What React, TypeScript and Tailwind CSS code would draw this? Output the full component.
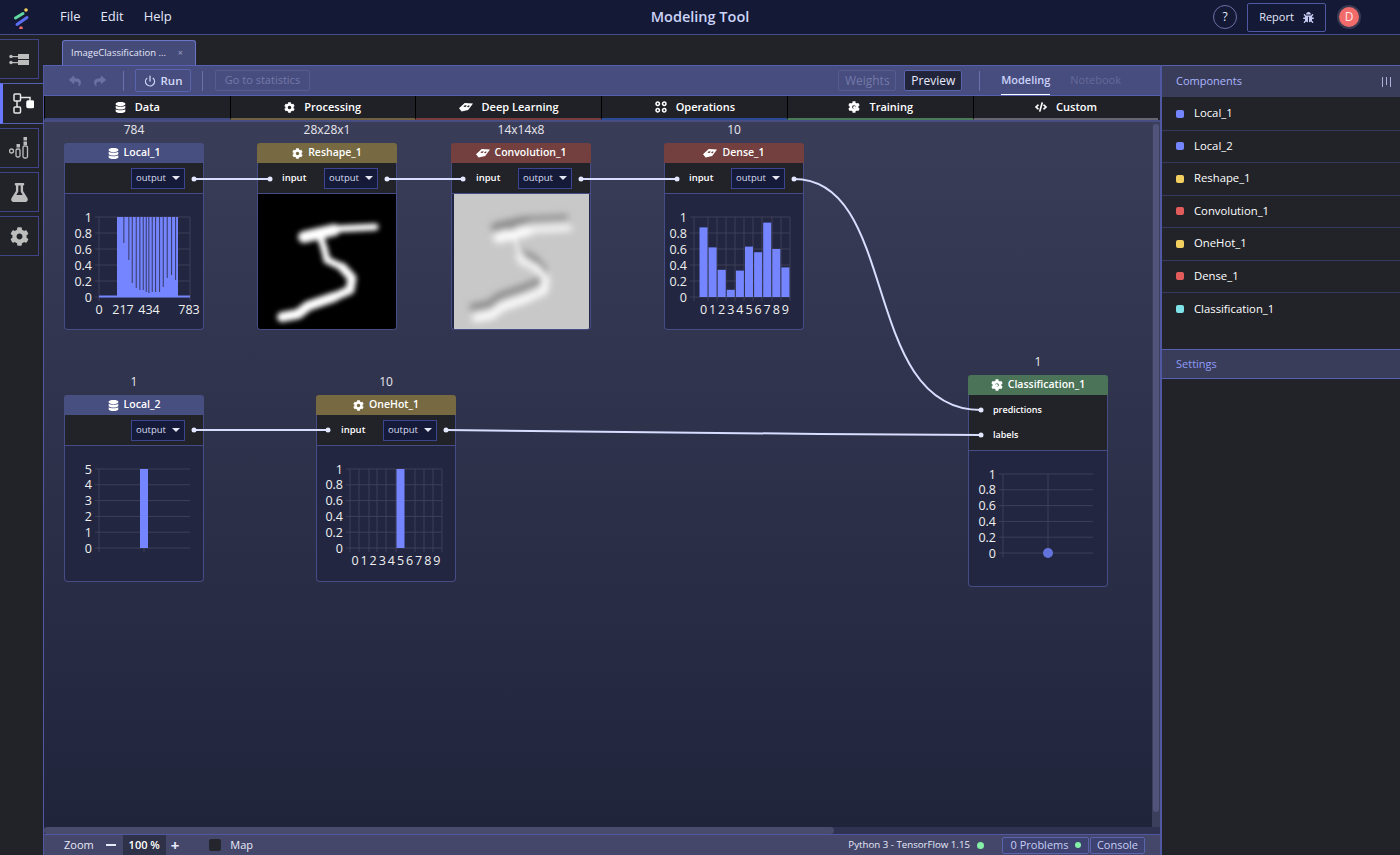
import React from "react";
import { FaBug, FaCode, FaCog, FaDatabase, FaFlask, FaReply, FaShare } from "react-icons/fa";
import { Power } from "lucide-react";

// canvas origin on the page, node and edge coordinates below are page pixels
const OX = 44;
const OY = 122;

const Brain = ({ className = "" }: { className?: string }) => (
  <svg viewBox="0 0 16 11" className={className} fill="currentColor">
    <path d="M0 7L6.500 1 16 1.500 10.500 9 3 10.500zM6.500 3.500L5 5.200l2.500.3 1.500-1.700zM10.500 3.800L9 5.500l2 .2 1.400-1.700z" fillRule="evenodd" />
  </svg>
);

const Ops = ({ className = "" }: { className?: string }) => (
  <svg viewBox="0 0 14 14" className={className} fill="none" stroke="currentColor" strokeWidth="1.800">
    <circle cx="3.200" cy="3.200" r="2" />
    <circle cx="10.800" cy="3.200" r="2" />
    <circle cx="3.200" cy="10.800" r="2" />
    <circle cx="10.800" cy="10.800" r="2" />
  </svg>
);

const TrainGear = ({ className = "" }: { className?: string }) => (
  <span className={`relative inline-flex items-center justify-center ${className}`}>
    <FaCog className="h-full w-full" />
    <span className="absolute h-[3px] w-[3px] rounded-full bg-white" />
  </span>
);

function Chart({
  yLabels,
  xLabels,
  x0,
  x1,
  top,
  bottom,
  vLines,
  children,
}: {
  yLabels: string[];
  xLabels: { t: string; x: number }[];
  x0: number;
  x1: number;
  top: number;
  bottom: number;
  vLines: number[];
  children?: React.ReactNode;
}) {
  const step = (bottom - top) / (yLabels.length - 1);
  return (
    <svg width="138" height="135" viewBox="0 0 138 135" className="block">
      {yLabels.map((l, i) => {
        const y = top + i * step;
        return (
          <g key={l}>
            <line x1={x0 - 4} x2={x1} y1={y} y2={y} stroke="#3f3f58" strokeWidth="1" />
            <text x={x0 - 7} y={y + 4.500} textAnchor="end" fontSize="12.500" fill="#f0f0f0">
              {l}
            </text>
          </g>
        );
      })}
      {vLines.map((x) => (
        <line key={x} x1={x} x2={x} y1={top} y2={bottom + 4} stroke="#3f3f58" strokeWidth="1" />
      ))}
      {children}
      {xLabels.map((l) => (
        <text key={l.t} x={l.x} y={bottom + 17} textAnchor="middle" fontSize="12.500" fill="#f0f0f0">
          {l.t}
        </text>
      ))}
    </svg>
  );
}

const Y_01 = ["1", "0.8", "0.6", "0.4", "0.2", "0"];
const digits = "0123456789".split("");

// dark notches cut into the flattened image chart: x, and how far down they reach
const notches = [
  [58.300, 49], [63.300, 66], [66.700, 89], [70.700, 94], [74.300, 96], [77.700, 96], [80.700, 98], [83.300, 99],
  [86.700, 98], [90, 98], [94, 98], [97.700, 93], [101.700, 84], [106, 81], [110, 86],
];

const Local1Chart = () => (
  <Chart
    yLabels={Y_01}
    xLabels={[
      { t: "0", x: 34 },
      { t: "217", x: 58 },
      { t: "434", x: 84 },
      { t: "783", x: 124 },
    ]}
    x0={34}
    x1={125}
    top={23}
    bottom={103}
    vLines={[34, 125]}
  >
    <rect x="34" y="101.500" width="91" height="2" fill="#7485ff" />
    <rect x="52" y="23" width="61" height="80" fill="#7485ff" />
    {notches.map(([x, d]) => (
      <rect key={x} x={x} y="23" width="1.100" height={d - 23} fill="#3b3f70" />
    ))}
  </Chart>
);

const denseVals = [0.87, 0.62, 0.34, 0.09, 0.33, 0.63, 0.56, 0.93, 0.6, 0.37];

const DenseChart = () => (
  <Chart
    yLabels={Y_01}
    xLabels={digits.map((t, i) => ({ t, x: 38.500 + i * 9.100 }))}
    x0={29}
    x1={125}
    top={23}
    bottom={103}
    vLines={[29, 43, 52, 61, 70, 79, 88, 97, 107, 116, 125]}
  >
    {denseVals.map((v, i) => (
      <rect key={i} x={34.500 + i * 9.100} y={103 - v * 80} width="8" height={v * 80} fill="#7485ff" />
    ))}
  </Chart>
);

const Local2Chart = () => (
  <Chart yLabels={["5", "4", "3", "2", "1", "0"]} xLabels={[]} x0={34} x1={125} top={23} bottom={102} vLines={[34, 79]}>
    <rect x="75" y="23" width="8" height="79" fill="#7485ff" />
  </Chart>
);

const OneHotChart = () => (
  <Chart
    yLabels={Y_01}
    xLabels={digits.map((t, i) => ({ t, x: 38 + i * 9.100 }))}
    x0={33}
    x1={125}
    top={23}
    bottom={102}
    vLines={[33, 42, 52, 60, 69, 79, 98, 107, 116, 125]}
  >
    <rect x="79.500" y="23" width="8" height="79" fill="#7485ff" />
  </Chart>
);

const ClassChart = () => (
  <Chart yLabels={Y_01} xLabels={[]} x0={34} x1={124} top={23} bottom={102} vLines={[34, 79]}>
    <circle cx="79" cy="102" r="5" fill="#6373dc" />
  </Chart>
);

// the handwritten 5, stroke by stroke so the widths can differ
const FIVE_STROKES: [string, number][] = [
  ["M117 33 L76 35", 7],
  ["M76 36 L46 43", 12],
  ["M62 42 L66 54 L69 66", 7],
  ["M69 66 L84 73", 7],
  ["M84 73 L94 84 L92 96 L76 103", 9],
  ["M76 103 L50 112 L40 120 L24 123", 10],
];

const DigitStrokes = ({ color, scale = 1 }: { color: string; scale?: number }) => (
  <>
    {FIVE_STROKES.map(([d, w]) => (
      <path key={d} d={d} fill="none" stroke={color} strokeWidth={w * scale} strokeLinejoin="round" strokeLinecap="round" />
    ))}
  </>
);

const DigitImage = () => (
  <svg width="138" height="135" viewBox="0 0 138 135" className="block bg-black">
    <defs>
      <filter id="blur5" x="-20%" y="-20%" width="140%" height="140%">
        <feGaussianBlur stdDeviation="2.800" />
      </filter>
    </defs>
    <g filter="url(#blur5)">
      <DigitStrokes color="#ffffff" />
    </g>
  </svg>
);

const EmbossImage = () => (
  <svg width="135" height="135" viewBox="0 0 135 135" className="block bg-[#c8c8c8]">
    <defs>
      <filter id="blur6" x="-20%" y="-20%" width="140%" height="140%">
        <feGaussianBlur stdDeviation="3.500" />
      </filter>
    </defs>
    <g transform="translate(-5 -10)" filter="url(#blur6)">
      <DigitStrokes color="#8a8a8a" scale={0.7} />
    </g>
    <g transform="translate(-2 1)" filter="url(#blur6)">
      <DigitStrokes color="#ffffff" scale={0.8} />
    </g>
  </svg>
);

const Select = () => (
  <div className="flex h-[21px] w-[54px] items-center justify-between border border-[#3c4690] bg-[#141a38] pl-1 pr-[4px] text-[9.500px] text-[#d8dcf0]">
    output
    <span className="h-0 w-0 border-x-[4px] border-t-[4px] border-x-transparent border-t-[#e6e8f4]" />
  </div>
);

const HEAD = {
  data: "bg-[#474e80]",
  proc: "bg-[#776a42]",
  deep: "bg-[#733f3f]",
  train: "bg-[#4a7358]",
};

function Node({
  x,
  y,
  w = 140,
  size,
  name,
  head,
  icon,
  input = true,
  children,
}: {
  x: number;
  y: number;
  w?: number;
  size: string;
  name: string;
  head: string;
  icon: React.ReactNode;
  input?: boolean;
  children: React.ReactNode;
}) {
  return (
    <div className="absolute" style={{ left: x - OX, top: y - OY, width: w }}>
      <div className="absolute -top-[20px] left-0 right-0 text-center text-[12px] leading-[14px] text-[#e8e8ee]">{size}</div>
      <div className={`flex h-[20px] items-center justify-center gap-[5px] rounded-t-[3px] text-[10.500px] font-semibold text-white ${head}`}>
        {icon}
        {name}
      </div>
      <div className="overflow-hidden rounded-b-[4px] border-x border-b border-[#454c86] bg-[#222640]">
        <div className={`flex h-[31px] items-center border-b border-[#454c86] bg-[#222329] pr-[18px] ${input ? "justify-between pl-6" : "justify-end"}`}>
          {input && <span className="text-[9.500px] font-semibold text-white">input</span>}
          <Select />
        </div>
        {children}
      </div>
    </div>
  );
}

const edges = [
  "M194 179 L270 179",
  "M387 179 L463 179",
  "M581 179 L677 179",
  "M794 179 C 900 179, 860 410, 981 410",
  "M194 430 L328 430",
  "M446 430 C 600 430, 800 435, 981 435",
];
const dots = [
  [194, 179], [270, 179], [387, 179], [463, 179], [581, 179], [677, 179], [794, 179],
  [194, 430], [328, 430], [446, 430], [981, 410], [981, 435],
];

const Canvas = () => (
  <div className="relative min-h-0 flex-1 overflow-hidden bg-gradient-to-b from-[#3a3d58] to-[#20243b]">
    <Node x={64} y={143} size="784" name="Local_1" head={HEAD.data} icon={<FaDatabase className="h-[11px] w-[11px]" />} input={false}>
      <Local1Chart />
    </Node>
    <Node x={257} y={143} size="28x28x1" name="Reshape_1" head={HEAD.proc} icon={<FaCog className="h-[11px] w-[11px]" />}>
      <DigitImage />
    </Node>
    <Node x={451} y={143} size="14x14x8" name="Convolution_1" head={HEAD.deep} icon={<Brain className="h-[10px] w-[14px]" />}>
      <div className="flex justify-center">
        <EmbossImage />
      </div>
    </Node>
    <Node x={664} y={143} size="10" name="Dense_1" head={HEAD.deep} icon={<Brain className="h-[10px] w-[14px]" />}>
      <DenseChart />
    </Node>
    <Node x={64} y={395} size="1" name="Local_2" head={HEAD.data} icon={<FaDatabase className="h-[11px] w-[11px]" />} input={false}>
      <Local2Chart />
    </Node>
    <Node x={316} y={395} size="10" name="OneHot_1" head={HEAD.proc} icon={<FaCog className="h-[11px] w-[11px]" />}>
      <OneHotChart />
    </Node>

    <div className="absolute" style={{ left: 968 - OX, top: 375 - OY, width: 140 }}>
      <div className="absolute -top-[20px] left-0 right-0 text-center text-[12px] leading-[14px] text-[#e8e8ee]">1</div>
      <div className={`flex h-[20px] items-center justify-center gap-[5px] rounded-t-[3px] text-[10.500px] font-semibold text-white ${HEAD.train}`}>
        <TrainGear className="h-[12px] w-[12px]" />
        Classification_1
      </div>
      <div className="overflow-hidden rounded-b-[4px] border-x border-b border-[#454c86] bg-[#222640]">
        <div className="flex h-[56px] flex-col justify-center gap-[11px] border-b border-[#454c86] bg-[#222329] pl-6 text-[9px] font-semibold leading-[14px] text-white">
          <span>predictions</span>
          <span>labels</span>
        </div>
        <ClassChart />
      </div>
    </div>

    {/* connections */}
    <svg className="pointer-events-none absolute left-0 top-0" width="1116" height="712" viewBox={`${OX} ${OY} 1116 712`} fill="none">
      {edges.map((d) => (
        <path key={d} d={d} stroke="#d8deff" strokeWidth="2" />
      ))}
      {dots.map(([cx, cy]) => (
        <circle key={`${cx}-${cy}`} cx={cx} cy={cy} r="2.500" fill="#e4e8ff" />
      ))}
    </svg>

    {/* scrollbars */}
    <div className="absolute bottom-0 right-0 top-0 w-[8px] bg-[#3c3f5c]">
      <div className="mx-auto mt-[2px] h-[688px] w-[6px] rounded-full bg-[#50547a]" />
    </div>
    <div className="absolute bottom-0 left-0 right-0 h-[7px] bg-[#2f3250]">
      <div className="h-[7px] w-[790px] rounded-full bg-[#484b6c]" />
    </div>
  </div>
);

const catTabs = [
  { label: "Data", icon: <FaDatabase className="h-[11px] w-[11px]" />, bar: "border-b-[#414a80]", w: "w-[186px]" },
  { label: "Processing", icon: <FaCog className="h-[11px] w-[11px]" />, bar: "border-b-[#6f6040]", w: "w-[185px]" },
  { label: "Deep Learning", icon: <Brain className="h-[10px] w-[14px]" />, bar: "border-b-[#7a3d3d]", w: "w-[187px]" },
  { label: "Operations", icon: <Ops className="h-[12px] w-[12px]" />, bar: "border-b-[#2b4c94]", w: "w-[186px]" },
  { label: "Training", icon: <TrainGear className="h-[12px] w-[12px]" />, bar: "border-b-[#4a7a58]", w: "w-[186px]" },
  { label: "Custom", icon: <FaCode className="h-[12px] w-[12px]" />, bar: "border-b-[#666670]", w: "w-[185px]" },
];

const components = [
  { name: "Local_1", dot: "bg-[#7485ff]" },
  { name: "Local_2", dot: "bg-[#7485ff]" },
  { name: "Reshape_1", dot: "bg-[#f2d060]" },
  { name: "Convolution_1", dot: "bg-[#e25c5c]" },
  { name: "OneHot_1", dot: "bg-[#f2d060]" },
  { name: "Dense_1", dot: "bg-[#e25c5c]" },
  { name: "Classification_1", dot: "bg-[#7fe3ea]" },
];

const NavBox = ({ active, children }: { active?: boolean; children: React.ReactNode }) =>
  active ? (
    <div className="relative z-10 flex h-[41px] w-[43px] items-center justify-center border-y border-[#5660b0] border-l-[3px] border-l-[#6a78ff] bg-[#222329] text-[#e8e8e8]">
      {children}
    </div>
  ) : (
    <div className="flex h-[40px] w-[39px] items-center justify-center border-y border-r border-[#3f4588] bg-[#222329] text-[#bdbdbd]">
      {children}
    </div>
  );

export default function App() {
  return (
    <div className="flex h-[855px] w-[1400px] flex-col overflow-hidden bg-[#222329] font-['Open_Sans',sans-serif] text-white">
      {/* top bar */}
      <header className="relative flex h-[35px] shrink-0 items-center border-b border-[#454c8c] bg-[#141a35]">
        <svg width="24" height="24" viewBox="0 0 24 24" className="ml-[11px]">
          <line x1="4.500" y1="13" x2="12" y2="8.500" stroke="#5fd9a0" strokeWidth="3" strokeLinecap="round" />
          <line x1="6" y1="19.500" x2="16" y2="12.500" stroke="#5c6ef0" strokeWidth="3" strokeLinecap="round" />
          <circle cx="15" cy="5" r="1.800" fill="#f2d060" />
          <circle cx="10" cy="23" r="1.800" fill="#ef6b6b" />
        </svg>
        <nav className="ml-[25px] flex gap-[20px] text-[13px] text-[#e4e7fa]">
          <span>File</span>
          <span>Edit</span>
          <span>Help</span>
        </nav>
        <div className="absolute left-0 right-0 text-center text-[14.500px] font-semibold text-[#ccd3f8]">Modeling Tool</div>
        <div className="ml-auto mr-[39px] flex items-center">
          <div className="flex h-[24px] w-[24px] items-center justify-center rounded-full border border-[#6a70a8] text-[12px] text-[#e4e7fa]">?</div>
          <div className="ml-[10px] flex h-[29px] w-[79px] items-center justify-center gap-[9px] rounded-[2px] border border-[#4f58a0] text-[11px] text-[#e4e7fa]">
            Report
            <FaBug className="h-[11px] w-[11px] text-[#c6ccf4]" />
          </div>
          <div className="ml-[11px] flex h-[24px] w-[24px] items-center justify-center rounded-full border-[2px] border-[#373a52] bg-[#f26b6b] text-[12px] text-[#fde6e6]">D</div>
        </div>
      </header>

      <div className="flex min-h-0 flex-1">
        {/* nav rail */}
        <aside className="flex w-[43px] shrink-0 flex-col gap-[4px] pt-[4px]">
          <NavBox>
            <svg width="20" height="11" viewBox="0 0 20 11" fill="currentColor">
              <rect x="9" y="0" width="11" height="5" />
              <rect x="9" y="6" width="11" height="5" />
              <rect x="2" y="2" width="8" height="1.200" />
              <rect x="2" y="8" width="8" height="1.200" />
              <circle cx="2" cy="2.500" r="1.700" />
              <circle cx="2" cy="8.500" r="1.700" />
            </svg>
          </NavBox>
          <NavBox active>
            <svg width="21" height="21" viewBox="0 0 21 21" fill="none" stroke="currentColor" strokeWidth="1.500">
              <rect x="1" y="1" width="6.500" height="7" rx="1" />
              <rect x="1" y="14" width="6.500" height="6" rx="1" />
              <rect x="14" y="8" width="6.500" height="6.500" rx="1" fill="#fff" stroke="#fff" />
              <path d="M4 8V14M7.500 4.500H17V8" />
            </svg>
          </NavBox>
          <NavBox>
            <svg width="20" height="24" viewBox="0 0 20 24" fill="none" stroke="currentColor" strokeWidth="1.300">
              <circle cx="2.500" cy="15" r="2" />
              <rect x="7" y="13" width="4" height="8" rx="1.500" />
              <rect x="7.500" y="8" width="3.500" height="3.500" fill="currentColor" stroke="none" />
              <rect x="14" y="10" width="4.500" height="12" rx="1.500" />
              <rect x="14.500" y="1" width="3.500" height="3.500" fill="currentColor" stroke="none" />
              <rect x="14.500" y="5.500" width="3.500" height="3.500" fill="currentColor" stroke="none" />
            </svg>
          </NavBox>
          <NavBox>
            <FaFlask className="h-[19px] w-[19px]" />
          </NavBox>
          <NavBox>
            <FaCog className="h-[19px] w-[19px]" />
          </NavBox>
        </aside>

        <div className="flex min-w-0 flex-1 flex-col">
          {/* file tabs */}
          <div className="flex h-[30px] shrink-0 items-end pl-[19px]">
            <div className="flex h-[25px] w-[134px] items-center justify-between rounded-t-[3px] border-x border-t border-[#6a74c8] bg-[#454b78] pl-2 pr-3 text-[9.500px] text-[#e4e7fa]">
              ImageClassification ...
              <span className="text-[9px] text-[#9a9fc4]">×</span>
            </div>
          </div>

          <div className="flex min-h-0 flex-1">
            {/* editor */}
            <main className="flex w-[1117px] shrink-0 flex-col border-l border-[#4f58a0]">
              <div className="flex h-[31px] shrink-0 items-center border-y border-[#5660b0] bg-[#474d7f] text-[12px]">
                <FaReply className="ml-[25px] h-[12px] w-[12px] text-[#6a70a0]" />
                <FaShare className="ml-[13px] h-[12px] w-[12px] text-[#6a70a0]" />
                <div className="ml-[17px] h-[20px] w-px bg-[#6a70a8]" />
                <div className="ml-[11px] flex h-[23px] w-[56px] items-center justify-center gap-[5px] rounded-[2px] border border-[#5a64ac] text-[11.500px] font-semibold text-[#d5daf8]">
                  <Power className="h-[12px] w-[12px]" strokeWidth={2.500} />
                  Run
                </div>
                <div className="ml-[11px] h-[20px] w-px bg-[#6a70a8]" />
                <div className="ml-[12px] flex h-[21px] w-[95px] items-center justify-center rounded-[2px] border border-[#565c90] text-[11px] text-[#7479a8]">Go to statistics</div>
                <div className="ml-auto flex h-[21px] w-[58px] items-center justify-center rounded-[2px] border border-[#565c90] text-[#7479a8]">Weights</div>
                <div className="ml-[8px] flex h-[21px] w-[58px] items-center justify-center rounded-[2px] border border-[#5a64ac] bg-[#22243a] text-[#e8eafa]">Preview</div>
                <div className="ml-[17px] h-[20px] w-px bg-[#6a70a8]" />
                <div className="relative ml-[21px] flex h-[29px] w-[49px] items-center justify-center text-[11px] font-semibold text-[#ccd3f8]">
                  Modeling
                  <span className="absolute bottom-0 left-0 right-0 h-px bg-white" />
                </div>
                <div className="ml-[20px] mr-[39px] text-[11px] text-[#656a98]">Notebook</div>
              </div>

              <div className="flex h-[26px] shrink-0 border-b-[2px] border-[#474d80] bg-[#202127] pr-[2px]">
                {catTabs.map((t) => (
                  <div key={t.label} className={`flex items-center justify-center gap-[9px] border-b-[2px] border-l border-l-black text-[11px] font-semibold text-white ${t.bar} ${t.w}`}>
                    {t.icon}
                    {t.label}
                  </div>
                ))}
              </div>

              <Canvas />

              <footer className="flex h-[21px] shrink-0 items-center border-t border-[#4f58a0] bg-[#44476a] text-[11px]">
                <span className="ml-[20px] text-[#e8eafa]">Zoom</span>
                <span className="ml-[12px] h-[2px] w-[10px] bg-[#e8eafa]" />
                <span className="ml-[7px] flex h-full w-[43px] items-center justify-center bg-[#2f3148] font-semibold text-white">100 %</span>
                <span className="ml-[5px] text-[15px] font-bold leading-none text-[#e8eafa]">+</span>
                <span className="ml-[30px] h-[12px] w-[12px] rounded-[2px] bg-[#24252d]" />
                <span className="ml-[9px] text-[#e8eafa]">Map</span>
                <span className="ml-auto text-[9.700px] text-[#e8eafa]">Python 3 - TensorFlow 1.15</span>
                <span className="ml-[7px] h-[7px] w-[7px] rounded-full bg-[#86f0a8]" />
                <div className="ml-[18px] flex h-[17px] w-[87px] items-center justify-center gap-[6px] rounded-[2px] border border-[#5a64ac] bg-[#3d4270] text-[#c8cdf4]">
                  0 Problems
                  <span className="h-[6px] w-[6px] rounded-full bg-[#86f0a8]" />
                </div>
                <div className="ml-px mr-[15px] flex h-[17px] w-[55px] items-center justify-center rounded-[2px] border border-[#5a64ac] bg-[#3d4270] text-[#c8cdf4]">Console</div>
              </footer>
            </main>

            {/* right panel */}
            <aside className="flex min-w-0 flex-1 flex-col border-l-[2px] border-[#4f58a0]">
              <div className="flex h-[32px] shrink-0 items-center justify-between border-t border-t-[#5660b0] bg-[#3a3d5a] pl-[14px] pr-[9px] text-[11px] text-[#aab6ff]">
                Components
                <span className="flex h-[10px] gap-[3px]">
                  <span className="h-full w-px bg-[#aab0d8]" />
                  <span className="h-[8px] w-px bg-[#aab0d8]" />
                  <span className="h-full w-px bg-[#aab0d8]" />
                </span>
              </div>
              <ul className="h-[252px] shrink-0 pt-px">
                {components.map((c, i) => (
                  <li key={c.name} className={`flex h-[32.500px] items-center gap-[10px] pl-[14px] text-[11.300px] text-white ${i < 6 ? "border-b border-[#353a5c]" : ""}`}>
                    <span className={`h-[8px] w-[8px] rounded-[2px] ${c.dot}`} />
                    {c.name}
                  </li>
                ))}
              </ul>
              <div className="flex h-[30px] shrink-0 items-center border-y border-[#5660b0] bg-[#3a3d5a] pl-[14px] text-[11px] text-[#8e9cf8]">Settings</div>
            </aside>
          </div>
        </div>
      </div>
    </div>
  );
}
